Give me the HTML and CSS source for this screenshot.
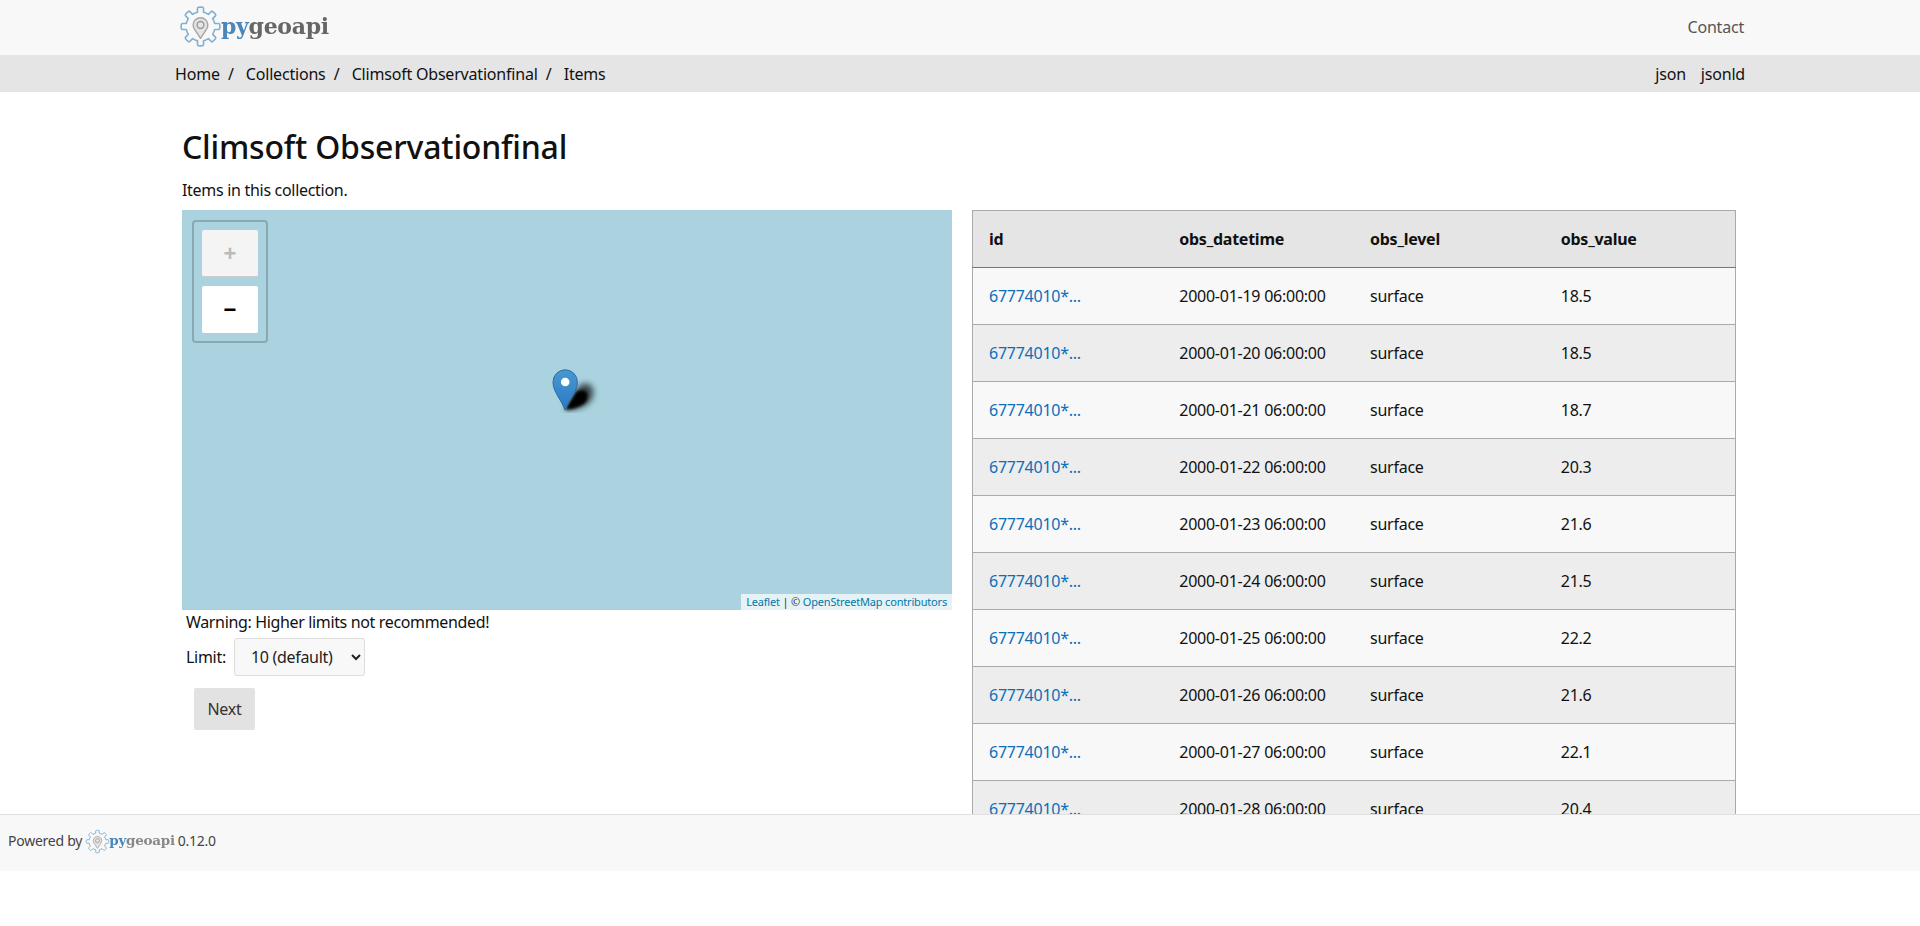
FILE: index.html

```html
<!DOCTYPE html>
<html lang="en">
<head>
  <meta charset="UTF-8" />
  <meta name="viewport" content="width=device-width, initial-scale=1.0"/>
  <title>Climsoft Observationfinal - Items</title>
  <link rel="stylesheet" href="styles.css">
</head>
<body>
  <svg class="defs" width="0" height="0">
    <defs>
      <g id="gear">
        <path id="gear-tooth" d="M14.83 7.53 L17.19 6.8 L17.18 3.2 Q17.2 2.2 18.2 2.1 Q20 1.9 21.8 2.1 Q22.8 2.2 22.82 3.2 L22.81 6.8 L25.17 7.53" fill="none" stroke="#7fb0d6" stroke-width="1.5" stroke-linejoin="round"/>
        <use href="#gear-tooth" transform="rotate(45 20 20)"/>
        <use href="#gear-tooth" transform="rotate(90 20 20)"/>
        <use href="#gear-tooth" transform="rotate(135 20 20)"/>
        <use href="#gear-tooth" transform="rotate(180 20 20)"/>
        <use href="#gear-tooth" transform="rotate(225 20 20)"/>
        <use href="#gear-tooth" transform="rotate(270 20 20)"/>
        <use href="#gear-tooth" transform="rotate(315 20 20)"/>
        <path d="M20 31 L14.4 22.5 A6.8 6.8 0 1 1 25.6 22.5 Z" fill="#e4e4e4" stroke="#a5a5a5" stroke-width="1.3" stroke-linejoin="round"/>
        <circle cx="20" cy="18.6" r="3.2" fill="none" stroke="#9a9a9a" stroke-width="1.3"/>
      </g>
    </defs>
  </svg>

  <div class="page">
    <header class="topbar">
      <a class="logo" href="#">
        <svg class="logo-gear" viewBox="0 0 40 40"><use href="#gear"/></svg>
        <span class="logo-text"><span class="logo-py">py</span>geoapi</span>
      </a>
      <a class="contact" href="#">Contact</a>
    </header>

    <nav class="crumbs">
      <div class="crumb-list">
        <a href="#">Home</a><span class="sep">/</span>
        <a href="#">Collections</a><span class="sep">/</span>
        <a href="#">Climsoft Observationfinal</a><span class="sep">/</span>
        <a href="#">Items</a>
      </div>
      <div class="formats">
        <a href="#">json</a>
        <a href="#">jsonld</a>
      </div>
    </nav>

    <main class="content">
      <h1>Climsoft Observationfinal</h1>
      <p class="lead">Items in this collection.</p>

      <div class="columns">
        <section class="left">
          <div class="map">
            <div class="zoom-box">
              <a class="zoom-btn zoom-off" href="#">+</a>
              <a class="zoom-btn" href="#">−</a>
            </div>
            <svg class="marker" width="60" height="46" viewBox="0 0 60 46">
              <defs>
                <linearGradient id="pin-fill" x1="0" y1="0" x2="0" y2="1">
                  <stop offset="0" stop-color="#4a98d0"/>
                  <stop offset="1" stop-color="#2a79c4"/>
                </linearGradient>
                <filter id="pin-blur" x="-40%" y="-40%" width="180%" height="180%">
                  <feGaussianBlur stdDeviation="3"/>
                </filter>
                <filter id="pin-core" x="-40%" y="-40%" width="180%" height="180%">
                  <feGaussianBlur stdDeviation="1.5"/>
                </filter>
              </defs>
              <path d="M14 43 L27 20 Q35 13 41 20 Q45 31 35 38 Q26 43 14 43 Z" fill="#000" fill-opacity="0.7" filter="url(#pin-blur)"/>
              <path d="M14 43 L25 25 Q32 21 36 26 Q38 34 31 38 Q24 42 14 43 Z" fill="#000" filter="url(#pin-core)"/>
              <path d="M14 43 C10 32 2 25 2 15 A12.2 12.2 0 0 1 26.4 15 C26.4 25 18 32 14 43 Z" fill="url(#pin-fill)" stroke="#2a6ea8" stroke-width="1"/>
              <circle cx="14.2" cy="15" r="4.3" fill="#fff"/>
            </svg>
            <div class="attribution"><a href="#">Leaflet</a> | © <a href="#">OpenStreetMap contributors</a></div>
          </div>

          <p class="warning">Warning: Higher limits not recommended!</p>
          <div class="limit">
            <label for="limit">Limit:</label>
            <select id="limit">
              <option>10 (default)</option>
              <option>100</option>
              <option>1000</option>
            </select>
          </div>
          <a class="next" href="#">Next</a>
        </section>

        <section class="right">
          <table class="items">
            <thead>
              <tr><th>id</th><th>obs_datetime</th><th>obs_level</th><th>obs_value</th></tr>
            </thead>
            <tbody>
              <tr><td><a href="#">67774010*...</a></td><td>2000-01-19 06:00:00</td><td>surface</td><td>18.5</td></tr>
              <tr><td><a href="#">67774010*...</a></td><td>2000-01-20 06:00:00</td><td>surface</td><td>18.5</td></tr>
              <tr><td><a href="#">67774010*...</a></td><td>2000-01-21 06:00:00</td><td>surface</td><td>18.7</td></tr>
              <tr><td><a href="#">67774010*...</a></td><td>2000-01-22 06:00:00</td><td>surface</td><td>20.3</td></tr>
              <tr><td><a href="#">67774010*...</a></td><td>2000-01-23 06:00:00</td><td>surface</td><td>21.6</td></tr>
              <tr><td><a href="#">67774010*...</a></td><td>2000-01-24 06:00:00</td><td>surface</td><td>21.5</td></tr>
              <tr><td><a href="#">67774010*...</a></td><td>2000-01-25 06:00:00</td><td>surface</td><td>22.2</td></tr>
              <tr><td><a href="#">67774010*...</a></td><td>2000-01-26 06:00:00</td><td>surface</td><td>21.6</td></tr>
              <tr><td><a href="#">67774010*...</a></td><td>2000-01-27 06:00:00</td><td>surface</td><td>22.1</td></tr>
              <tr><td><a href="#">67774010*...</a></td><td>2000-01-28 06:00:00</td><td>surface</td><td>20.4</td></tr>
            </tbody>
          </table>
        </section>
      </div>
    </main>

    <footer class="footer">
      Powered by
      <a class="logo logo-small" href="#">
        <svg class="logo-gear" viewBox="0 0 40 40"><use href="#gear"/></svg>
        <span class="logo-text"><span class="logo-py">py</span>geoapi</span>
      </a>
      0.12.0
    </footer>
  </div>
</body>
</html>
```

FILE: styles.css

```css
html, body {
  margin: 0;
  height: 100%;
  overflow: hidden;
}
body {
  font-family: "Noto Sans", "Open Sans", sans-serif;
  font-size: 16px;
  line-height: 24px;
  color: #111;
  background: #fff;
}
a {
  color: inherit;
  text-decoration: none;
}
.defs {
  position: absolute;
}
.page {
  height: 871px;
  display: flex;
  flex-direction: column;
}

/* top bar */
.topbar {
  height: 55px;
  flex: none;
  box-sizing: border-box;
  padding: 0 176px 2px 179px;
  background: #f8f8f8;
  display: flex;
  align-items: center;
  justify-content: space-between;
}
.contact {
  color: #555;
  letter-spacing: -0.2px;
}
.logo {
  display: inline-flex;
  align-items: center;
}
.logo-gear {
  width: 43px;
  height: 43px;
  flex: none;
}
.logo-text {
  font-family: "DejaVu Serif", serif;
  font-weight: bold;
  font-size: 22px;
  line-height: 1;
  letter-spacing: -0.3px;
  color: #666;
  margin-left: -1px;
  padding-bottom: 1px;
  filter: blur(0.3px);
}
.logo-py {
  color: #4a86b8;
}
.logo-small .logo-gear {
  width: 25px;
  height: 25px;
}
.logo-small .logo-text {
  font-size: 13.5px;
  letter-spacing: -0.25px;
  padding-bottom: 1px;
  color: #888;
}

/* breadcrumbs */
.crumbs {
  height: 37px;
  flex: none;
  box-sizing: border-box;
  padding: 0 175px;
  background: #e5e5e5;
  display: flex;
  align-items: center;
  justify-content: space-between;
  letter-spacing: -0.2px;
}
.sep {
  margin: 0 8.2px;
}
.formats {
  display: flex;
  gap: 15px;
}

/* main */
.content {
  flex: 1;
  min-height: 0;
  overflow: hidden;
  padding: 0 183px 0 182px;
}
h1 {
  margin: 33px 0 0;
  font-size: 32px;
  line-height: 44px;
  font-weight: 500;
  letter-spacing: -0.2px;
}
.lead {
  margin: 9px 0 8px;
  letter-spacing: -0.3px;
}
.columns {
  display: grid;
  grid-template-columns: 770px 764px;
  column-gap: 20px;
}

/* map */
.map {
  position: relative;
  height: 400px;
  background: #aad3df;
  overflow: hidden;
}
.zoom-box {
  position: absolute;
  left: 10px;
  top: 10px;
  width: 76px;
  height: 123px;
  box-sizing: border-box;
  padding: 8px;
  border: 2px solid rgba(0, 0, 0, 0.2);
  border-radius: 4px;
  display: flex;
  flex-direction: column;
  gap: 9px;
}
.zoom-btn {
  height: 47px;
  background: #fff;
  border-radius: 2px;
  color: #000;
  font: bold 22px/47px "Liberation Sans", sans-serif;
  text-align: center;
}
.zoom-off {
  background: #f4f4f4;
  color: #bbb;
  border-bottom: 1px solid #ccc;
  box-sizing: border-box;
}
.marker {
  position: absolute;
  left: 369px;
  top: 157px;
}
.attribution {
  position: absolute;
  right: 0;
  bottom: 0;
  height: 16px;
  padding: 0 5px;
  background: rgba(255, 255, 255, 0.7);
  font-size: 11px;
  line-height: 16px;
  color: #333;
  letter-spacing: -0.18px;
}
.attribution a {
  color: #0078a8;
}

/* under the map */
.warning {
  margin: 0;
  padding: 0 4px;
  letter-spacing: -0.35px;
}
.limit {
  margin-top: 4px;
  padding-left: 4px;
  display: flex;
  align-items: center;
  gap: 8px;
  letter-spacing: -0.3px;
}
.limit select {
  width: 131px;
  height: 38px;
  box-sizing: border-box;
  padding: 0 8px 0 12px;
  font: inherit;
  letter-spacing: -0.3px;
  color: #222;
  background: #f8f8f8;
  border: 1px solid #ddd;
  border-radius: 3px;
}
.next {
  display: inline-block;
  margin: 12px 0 0 12px;
  padding: 9px 13.5px;
  background: #e2e2e2;
  border-radius: 2px;
  color: #333;
  letter-spacing: -0.3px;
}

/* table */
.items {
  width: 100%;
  table-layout: fixed;
  border-collapse: collapse;
  border: 1px solid #aaa;
  letter-spacing: -0.25px;
}
.items th,
.items td {
  height: 24px;
  padding: 16px;
  text-align: left;
}
.items th {
  background: #e5e5e5;
  font-weight: 700;
  border-bottom: 1px solid #777;
}
.items td {
  border-top: 1px solid #aaa;
}
.items thead + tbody tr:first-child td {
  border-top: 0;
}
.items tbody tr:nth-child(odd) {
  background: #f8f8f8;
}
.items tbody tr:nth-child(even) {
  background: #ededed;
}
.items a {
  color: #0b6fb8;
}

/* footer */
.footer {
  height: 57px;
  flex: none;
  box-sizing: border-box;
  padding: 0 8px 4px;
  background: #f8f8f8;
  border-top: 1px solid #e0e0e0;
  display: flex;
  align-items: center;
  gap: 3px;
  font-size: 14px;
  color: #444;
  letter-spacing: -0.25px;
}
```
